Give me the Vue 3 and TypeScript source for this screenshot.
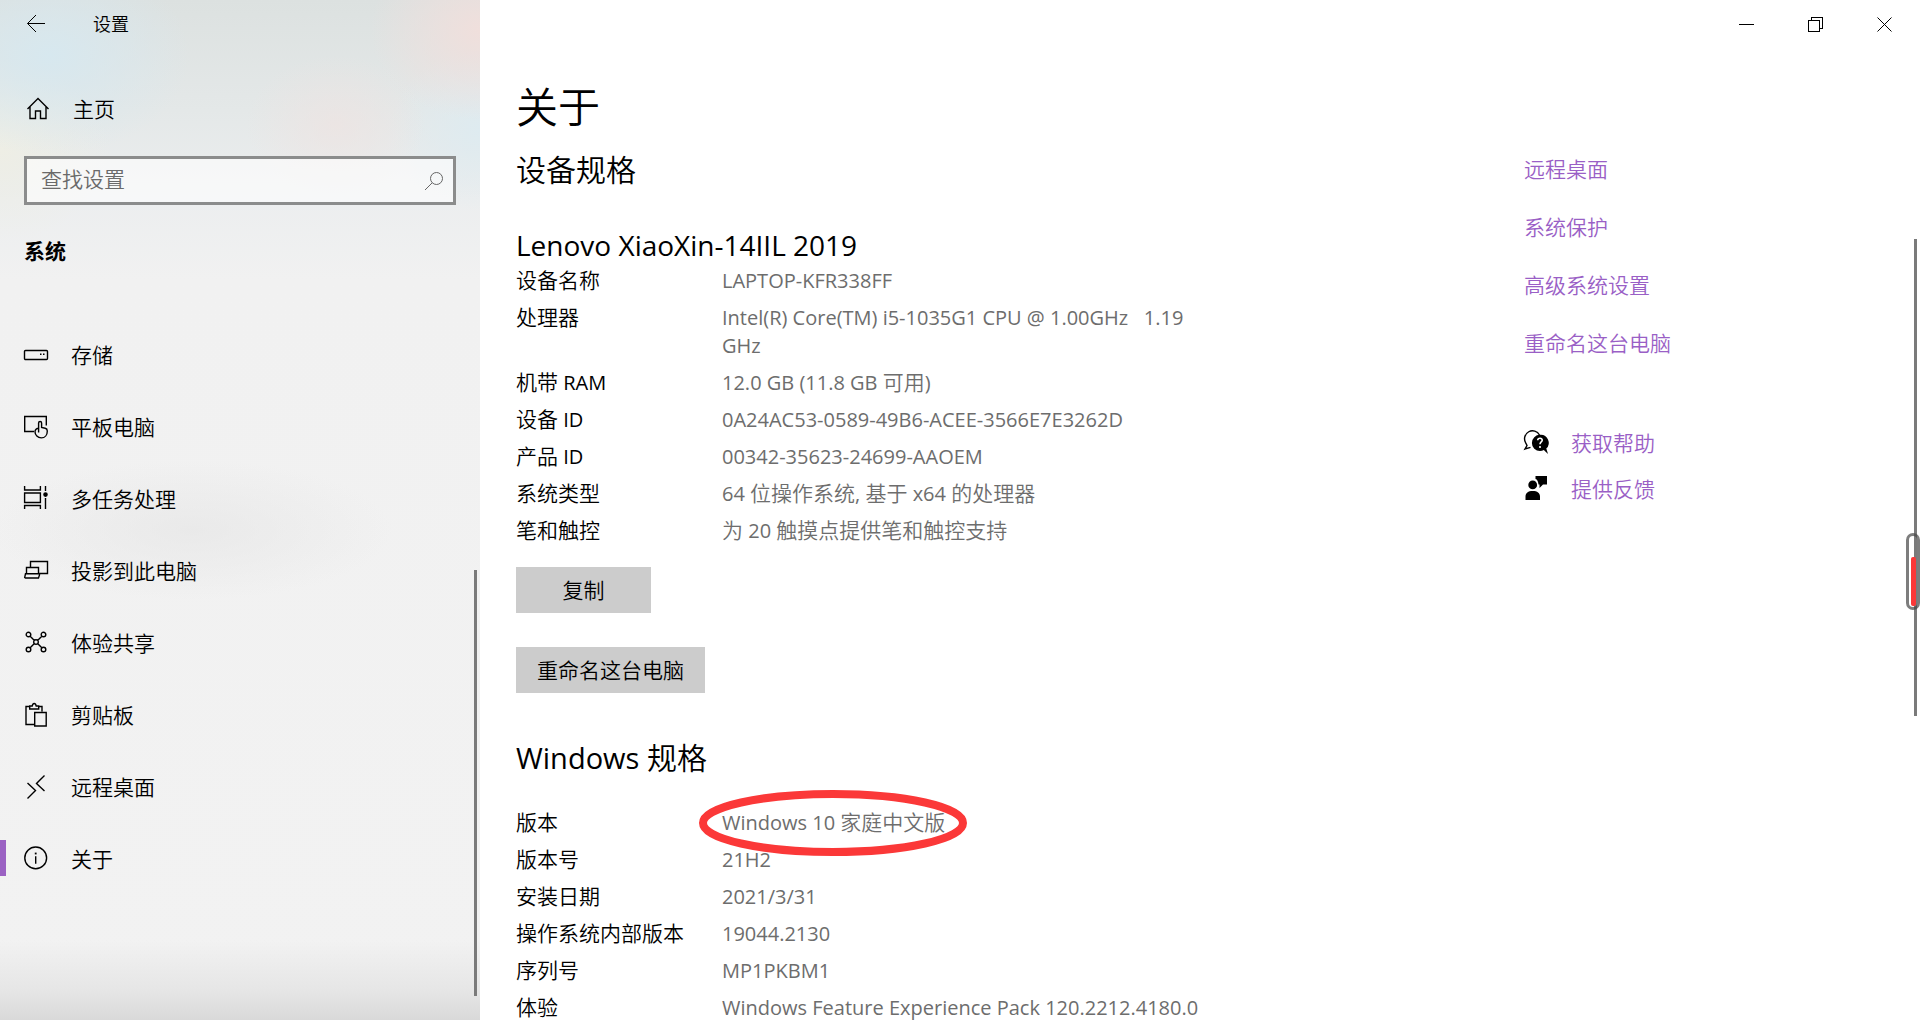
<script setup lang="ts">
import { ref } from 'vue'

interface Spec {
  label: string
  value: string
  marked?: boolean
}

interface Run {
  text: string
  latin: boolean
}

interface NavItem {
  label: string
  icon: string
  dots?: string
}

const query = ref('')
const current = ref('关于')

const navItems: NavItem[] = [
  { label: '存储', icon: 'M1.5 7.5h21a1 1 0 0 1 1 1v7a1 1 0 0 1-1 1h-21a1 1 0 0 1-1-1v-7a1 1 0 0 1 1-1z', dots: 'M16 10.5h1.5v1.5h-1.5zM19 10.5h1.5v1.5h-1.5z' },
  { label: '平板电脑', icon: 'M10 16.500H.7V1.500h21.600v9M14.600 17.500V8a1.500 1.500 0 0 1 3 0v4.500l3.600.8c1.400.3 2.100 1.200 2.100 2.600 0 4-2.300 7-6 7-3.500 0-6.300-2.800-6.300-6.200 0-1.700 1.600-3.500 3.600-3.500' },
  { label: '多任务处理', icon: 'M.6-1v4h15.800v-4M.6 6h15.800v9.500H.6zM.6 22v-3.500h15.800V22M21.500-1v5M21.500 11v11', dots: 'M21.500 5.300a2.300 2.300 0 1 0 0 4.600a2.300 2.300 0 1 0 0-4.600z' },
  { label: '投影到此电脑', icon: 'M6.500 8.500V2.500h17v12H15M2.500 14.500V8.500h12v6M1.500 14.800h14v1.200l-1 3h-13l-.8-.6z' },
  { label: '体验共享', icon: 'M12 8.700a2.300 2.300 0 1 0 0 4.600a2.300 2.300 0 1 0 0-4.600zM4.500 1.200a2.300 2.300 0 1 0 0 4.600a2.300 2.300 0 1 0 0-4.600zM19.500 1.200a2.300 2.300 0 1 0 0 4.600a2.300 2.300 0 1 0 0-4.600zM4.500 16.200a2.300 2.300 0 1 0 0 4.600a2.300 2.300 0 1 0 0-4.600zM19.500 16.200a2.300 2.300 0 1 0 0 4.600a2.300 2.300 0 1 0 0-4.600zM6.200 5.200l4.200 4.200M17.800 5.200l-4.200 4.200M6.200 16.800l4.200-4.200M17.800 16.800l-4.200-4.200' },
  { label: '剪贴板', icon: 'M10.500 21.500H2V3.500h3.500M14.500 3.500H18v5M5.700 6V3h2.500C8.500 1.500 9.300.5 10.200.5s1.700 1 2 2.500h2.500v3zM10.700 9.500h11.500v13.500H10.700z' },
  { label: '远程桌面', icon: 'M3.500 8l8 7.500-8 8M20.500 .5l-8 8 8 7.500' },
  { label: '关于', icon: 'M11.700 0a10.900 10.900 0 1 0 0 21.800a10.900 10.900 0 1 0 0-21.800zM11.700 9.300v7.500', dots: 'M10.800 5.600h1.800v1.800h-1.800z' },
]

const deviceSpecs: Spec[] = [
  { label: '设备名称', value: 'LAPTOP-KFR338FF' },
  { label: '处理器', value: 'Intel(R) Core(TM) i5-1035G1 CPU @ 1.00GHz   1.19 GHz' },
  { label: '机带 RAM', value: '12.0 GB (11.8 GB 可用)' },
  { label: '设备 ID', value: '0A24AC53-0589-49B6-ACEE-3566E7E3262D' },
  { label: '产品 ID', value: '00342-35623-24699-AAOEM' },
  { label: '系统类型', value: '64 位操作系统, 基于 x64 的处理器' },
  { label: '笔和触控', value: '为 20 触摸点提供笔和触控支持' },
]

const windowsSpecs: Spec[] = [
  { label: '版本', value: 'Windows 10 家庭中文版', marked: true },
  { label: '版本号', value: '21H2' },
  { label: '安装日期', value: '2021/3/31' },
  { label: '操作系统内部版本', value: '19044.2130' },
  { label: '序列号', value: 'MP1PKBM1' },
  { label: '体验', value: 'Windows Feature Experience Pack 120.2212.4180.0' },
]

const relatedLinks: string[] = ['远程桌面', '系统保护', '高级系统设置', '重命名这台电脑']

// Latin letters look larger than Chinese ones at the same size, so each script gets its own run.
function runs(text: string): Run[] {
  const parts = text.match(/[\x00-\x7f]+|[^\x00-\x7f]+/g) ?? []
  return parts.map((part) => ({ text: part, latin: part.charCodeAt(0) < 128 }))
}
</script>

<template>
  <div class="window">
    <aside class="sidebar">
      <header class="topbar">
        <button class="back" type="button" aria-label="返回">
          <svg width="20" height="20" viewBox="0 0 20 20"><path d="M19 9.500H1.500M10 1L1.500 9.500L10 18" /></svg>
        </button>
        <span class="app-name">设置</span>
      </header>

      <a class="home" href="#">
        <svg width="24" height="24" viewBox="0 0 24 24"><path class="bold" d="M1.500 12L12 1.500l10.500 10.500M4 10v11.500h5.500v-7.500h5v7.500H20V10" /></svg>
        <span>主页</span>
      </a>

      <label class="search">
        <input v-model="query" type="text" placeholder="查找设置" aria-label="查找设置" />
        <svg width="20" height="20" viewBox="0 0 20 20"><path d="M12.500 1.500a6 6 0 1 0 0 12a6 6 0 1 0 0-12zM8.200 11.800L1 19" /></svg>
      </label>

      <h2 class="group">系统</h2>

      <nav class="nav">
        <a
          v-for="item in navItems"
          :key="item.label"
          href="#"
          class="nav-item"
          :class="{ active: item.label === current }"
          @click.prevent="current = item.label"
        >
          <svg width="24" height="24" viewBox="0 0 24 24">
            <path class="bold" :d="item.icon" />
            <path v-if="item.dots" class="solid" :d="item.dots" />
          </svg>
          <span>{{ item.label }}</span>
        </a>
      </nav>
      <div class="scroll-thumb side-thumb"></div>
    </aside>

    <main class="main">
      <header class="topbar controls">
        <button type="button" aria-label="最小化">
          <svg width="15" height="15" viewBox="0 0 15 15" shape-rendering="crispEdges"><path d="M0 7.500h15" /></svg>
        </button>
        <button type="button" aria-label="还原">
          <svg width="15" height="15" viewBox="0 0 15 15" shape-rendering="crispEdges"><path d="M.5 3.500h11v11H.5zM3.500 3.500v-3h11v11h-3" /></svg>
        </button>
        <button type="button" aria-label="关闭">
          <svg width="15" height="15" viewBox="0 0 15 15"><path d="M.5 .5l14 14M14.500 .5l-14 14" /></svg>
        </button>
      </header>

      <div class="columns">
        <div class="content">
          <h1>关于</h1>
          <h2 class="section">设备规格</h2>
          <h3 class="model">Lenovo XiaoXin-14IIL 2019</h3>
          <dl class="specs">
            <div v-for="spec in deviceSpecs" :key="spec.label" class="row">
              <dt><span v-for="(run, i) in runs(spec.label)" :key="i" :class="{ latin: run.latin }">{{ run.text }}</span></dt>
              <dd><span v-for="(run, i) in runs(spec.value)" :key="i" :class="{ latin: run.latin }">{{ run.text }}</span></dd>
            </div>
          </dl>
          <div class="actions">
            <button type="button">复制</button>
            <button type="button">重命名这台电脑</button>
          </div>

          <h2 class="section windows"><span class="section-latin">Windows </span>规格</h2>
          <dl class="specs">
            <div v-for="spec in windowsSpecs" :key="spec.label" class="row">
              <dt>{{ spec.label }}</dt>
              <dd>
                <span v-for="(run, i) in runs(spec.value)" :key="i" :class="{ latin: run.latin }">{{ run.text }}</span>
                <svg v-if="spec.marked" class="ring" width="268" height="66" viewBox="0 0 268 66"><ellipse cx="134" cy="33" rx="130" ry="29" /></svg>
              </dd>
            </div>
          </dl>
        </div>

        <section class="related">
          <ul class="links">
            <li v-for="link in relatedLinks" :key="link"><a href="#">{{ link }}</a></li>
          </ul>
          <ul class="support">
            <li>
              <svg width="24" height="24" viewBox="0 0 24 24">
                <path class="bold" d="M15.500 4A7.600 7.600 0 0 0 1.500 11.500L3 14.500L1 18l5.500-1.700" />
                <path class="solid" d="M16 3.800a8 8 0 1 0 0 16.200c1.400 0 2.700-.3 3.800-1l4.200 4-1.700-5.500A8 8 0 0 0 16 3.800z" />
                <path class="question" d="M13.700 9.300c.2-2.800 4.800-2.600 4.500 0-.2 1.700-2.200 1.700-2.200 4M16 15v2" />
              </svg>
              <a href="#">获取帮助</a>
            </li>
            <li>
              <svg width="24" height="24" viewBox="0 0 24 24">
                <path class="solid" d="M11.500-1H23v8.500h-4L15.500 11V7.500h-1C14 4 13.300 2.600 11.500 2zM8.700 3.500a4.400 4.400 0 1 0 0 8.800a4.400 4.400 0 1 0 0-8.800zM1.500 23v-3.500c0-3.500 2.600-5.500 7.200-5.500s7.300 2 7.300 5.500V23z" />
              </svg>
              <a href="#">提供反馈</a>
            </li>
          </ul>
        </section>
      </div>
      <div class="scroll-thumb main-thumb"></div>
      <div class="gauge"><div class="gauge-level"></div></div>
    </main>
  </div>
</template>

<style>
body {
  margin: 0;
}
</style>

<style scoped>
.window {
  display: flex;
  height: 100vh;
  overflow: hidden;
  background: #fff;
  color: #000;
  font-family: "Open Sans", "Noto Sans CJK SC", sans-serif;
  font-size: 21px;
  font-weight: 350;
  line-height: 28px;
}

h1, h2, h3, dl, dd, ul {
  margin: 0;
  padding: 0;
  font-weight: inherit;
}

ul {
  list-style: none;
}

a {
  color: inherit;
  text-decoration: none;
}

button {
  border: 0;
  padding: 0;
  color: inherit;
  font: inherit;
}

svg {
  display: block;
  flex: none;
  overflow: visible;
  fill: none;
  stroke: #000;
}

.bold {
  stroke-width: 1.4;
}

.solid {
  fill: #000;
  stroke: none;
}

.latin {
  font-size: 20px;
  font-weight: 400;
  line-height: 20px;
}

.sidebar {
  position: relative;
  box-sizing: border-box;
  width: 25%;
  background:
    linear-gradient(to top, #d9d9d9, #e6e6e6 30px, rgba(242, 242, 242, 0) 80px),
    radial-gradient(ellipse 110px 90px at 100% 30px, #f0dfdc, rgba(240, 223, 220, 0)),
    radial-gradient(ellipse 90px 70px at 70% 125px, rgba(238, 227, 225, 0.7), rgba(238, 227, 225, 0)),
    radial-gradient(ellipse 90px 80px at 100% 130px, #deebf0, rgba(222, 235, 240, 0)),
    radial-gradient(ellipse 140px 100px at 50px 55px, #d7e8ef, rgba(215, 232, 239, 0)),
    radial-gradient(ellipse 110px 90px at 0 150px, #eeeee5, rgba(238, 238, 229, 0)),
    radial-gradient(ellipse 200px 70px at 40% 530px, rgba(230, 230, 230, 0.7), rgba(230, 230, 230, 0)),
    linear-gradient(#dce1e0, #e4e8e8 110px, #eceeef 200px, #f1f1f1 280px, #f2f2f2);
}

.topbar {
  display: flex;
  align-items: center;
  height: 48px;
}

.back {
  margin-left: 26px;
  background: none;
}

.app-name {
  margin-left: 47px;
  font-size: 18px;
}

.home {
  display: flex;
  align-items: center;
  gap: 23px;
  margin: 47px 26px 0;
}

.search {
  display: flex;
  align-items: center;
  box-sizing: border-box;
  height: 49px;
  margin: 33px 24px 0;
  padding: 0 9px 0 14px;
  border: 3px solid #8b8c8c;
  background: rgba(255, 255, 255, 0.6);
}

.search input {
  flex: 1;
  min-width: 0;
  padding: 0 0 3px;
  border: 0;
  outline: 0;
  background: none;
  color: #000;
  font: inherit;
}

.search input::placeholder {
  color: #6a6a6a;
  opacity: 1;
}

.search svg {
  stroke: #666;
}

.group {
  margin: 32px 24px 0;
  font-size: 21px;
  font-weight: 700;
}

.nav {
  margin-top: 54px;
}

.nav-item {
  position: relative;
  display: flex;
  align-items: center;
  gap: 23px;
  height: 72px;
  padding-left: 24px;
}

.nav-item.active::before {
  content: "";
  position: absolute;
  left: 0;
  top: 17px;
  width: 6px;
  height: 36px;
  background: #9b62c3;
}

.scroll-thumb {
  position: absolute;
  right: 3px;
  width: 3px;
  background: #7a7a7a;
}

.side-thumb {
  top: 570px;
  bottom: 24px;
}

.main {
  position: relative;
  flex: 1;
  min-width: 0;
}

.controls {
  justify-content: flex-end;
  padding-right: 1px;
}

.controls button {
  display: flex;
  align-items: center;
  justify-content: center;
  width: 69px;
  height: 48px;
  background: none;
}

.columns {
  display: flex;
}

.content {
  box-sizing: border-box;
  width: 72.5%;
  padding: 31px 0 0 36px;
}

h1 {
  font-size: 42px;
  line-height: 56px;
}

.section {
  margin-top: 15px;
  font-size: 30px;
  line-height: 40px;
}

.section-latin {
  font-size: 29px;
  font-weight: 400;
  line-height: 30px;
}

.model {
  margin-top: 37px;
  font-size: 28px;
  font-weight: 400;
  line-height: 36px;
}

.windows {
  margin: 45px 0 30px;
}

.specs {
  display: flex;
  flex-direction: column;
  gap: 9px;
  max-width: 690px;
}

.model + .specs {
  margin-top: 3px;
}

.row {
  display: flex;
}

dt {
  flex: none;
  width: 206px;
}

dd {
  position: relative;
  color: #6d6d6d;
}

dd span {
  white-space: pre-wrap;
}

.ring {
  position: absolute;
  left: -23px;
  top: -18px;
  stroke: #fb3838;
  stroke-width: 8;
}

.actions {
  display: flex;
  flex-direction: column;
  align-items: flex-start;
  gap: 34px;
  margin-top: 23px;
}

.actions button {
  min-width: 135px;
  height: 46px;
  padding: 0 21px;
  background: #ccc;
}

.related {
  flex: 1;
  padding-top: 107px;
  color: #9a5fc6;
}

.links {
  display: flex;
  flex-direction: column;
  gap: 30px;
}

.support {
  display: flex;
  flex-direction: column;
  gap: 18px;
  margin-top: 72px;
}

.support li {
  display: flex;
  align-items: center;
  gap: 23px;
}

.question {
  stroke: #fff;
  stroke-width: 1.6;
}

.main-thumb {
  top: 239px;
  height: 477px;
}

.gauge {
  position: absolute;
  right: 0;
  top: 533px;
  display: flex;
  align-items: flex-end;
  justify-content: center;
  box-sizing: border-box;
  width: 14px;
  height: 77px;
  padding-bottom: 1px;
  border: 3px solid rgba(70, 70, 70, 0.7);
  border-radius: 7px;
}

.gauge-level {
  width: 5px;
  height: 49px;
  border-radius: 2px;
  background: #fb3838;
}
</style>
